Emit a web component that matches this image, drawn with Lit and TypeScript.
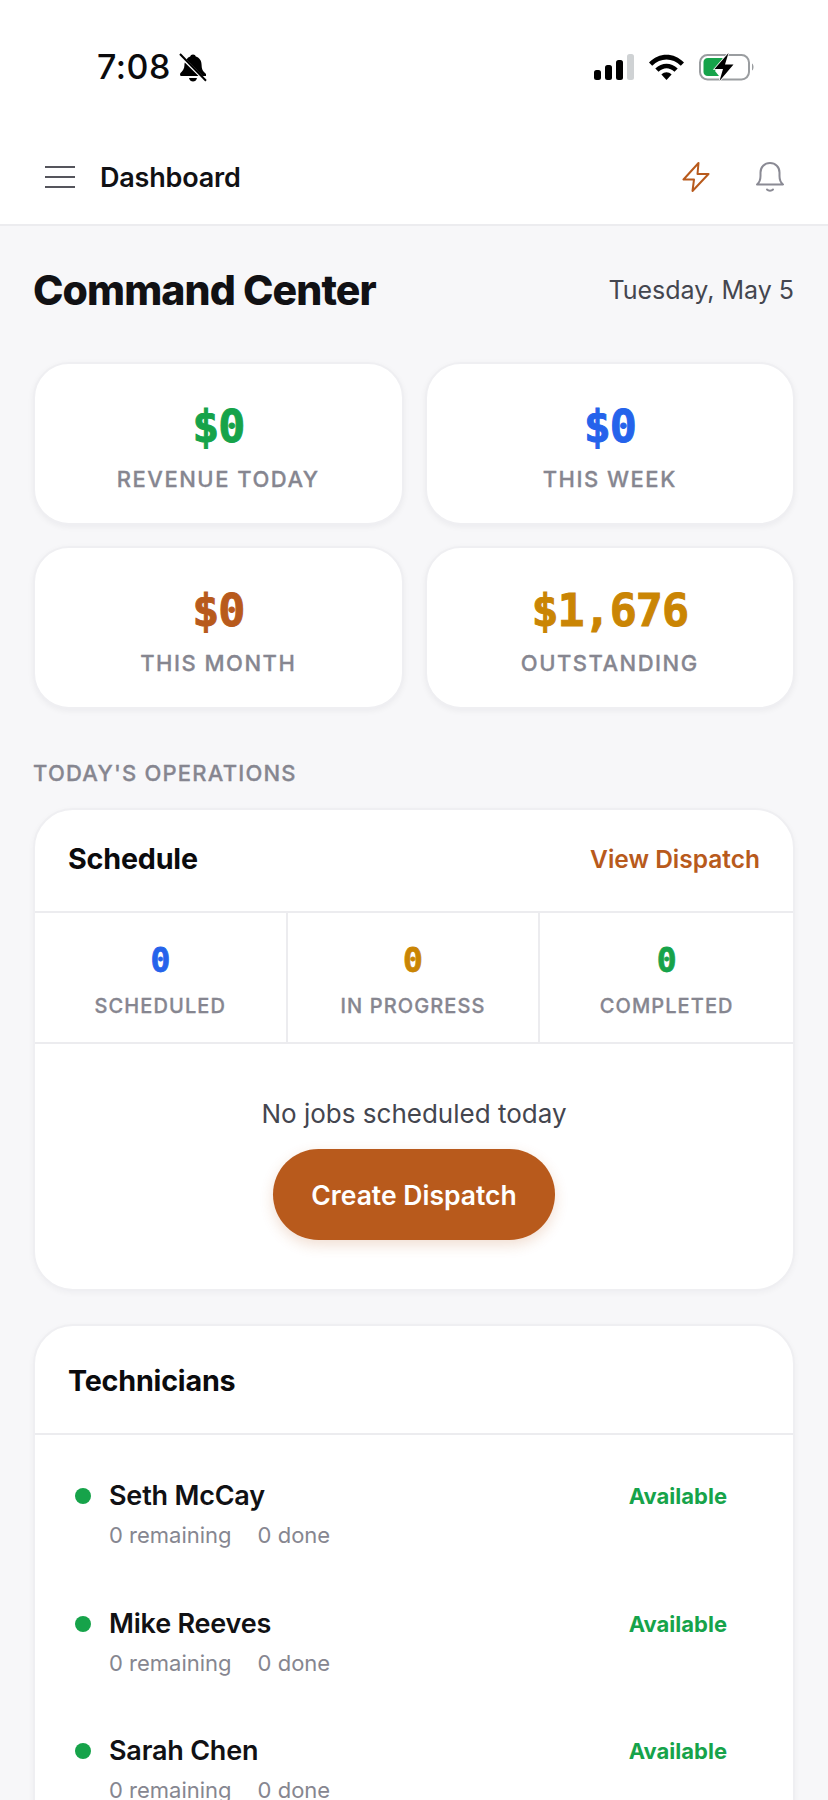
import { LitElement, html, css } from "lit";
import { customElement } from "lit/decorators.js";

const kpis = [
  { v: "$0", l: "REVENUE TODAY", c: "green" },
  { v: "$0", l: "THIS WEEK", c: "blue" },
  { v: "$0", l: "THIS MONTH", c: "orange" },
  { v: "$1,676", l: "OUTSTANDING", c: "gold" },
];
const ops = [
  { v: "0", l: "SCHEDULED", c: "blue" },
  { v: "0", l: "IN PROGRESS", c: "gold" },
  { v: "0", l: "COMPLETED", c: "green" },
];
const techs = ["Seth McCay", "Mike Reeves", "Sarah Chen"];

@customElement("app-root")
export class AppRoot extends LitElement {
  static styles = css`
    :host { display: block; width: 828px; height: 1800px; overflow: hidden; background: #f7f7f9; font-family: Inter, "Liberation Sans", sans-serif; color: #111114; }
    * { box-sizing: border-box; }
    svg { display: block; flex: none; }
    .status { height: 120px; background: #fff; display: flex; align-items: flex-start; justify-content: space-between; padding: 47px 73px 0 97px; }
    .status-left { display: flex; align-items: center; gap: 8px; }
    .time { font-size: 34px; line-height: 40px; font-weight: 500; color: #0b0b0d; letter-spacing: 0.5px; }
    .status-right { display: flex; align-items: center; gap: 15px; height: 40px; }
    .topbar { height: 106px; background: #fff; border-bottom: 2px solid #ececef; display: flex; align-items: center; padding: 10px 44px 0 45px; }
    .page-name { margin-left: 25px; font-size: 27px; font-weight: 600; letter-spacing: -0.2px; flex: 1; }
    .top-icons { display: flex; align-items: center; gap: 46px; }
    main { padding: 0 33px; }
    .title-row { display: flex; justify-content: space-between; align-items: center; height: 48px; margin-top: 40px; }
    h1 { margin: 0; font-size: 41px; font-weight: 800; letter-spacing: -0.9px; }
    .date { font-size: 25px; color: #44464f; margin-right: 1px; }
    .kpis { display: grid; grid-template-columns: 1fr 1fr; column-gap: 21px; row-gap: 21px; margin-top: 48px; }
    .kpi { height: 163px; background: #fff; border: 2px solid #efeff2; border-radius: 36px; box-shadow: 0 2px 6px rgba(20, 20, 40, 0.05); display: flex; flex-direction: column; align-items: center; padding-top: 35px; }
    .kpi .val { font: 700 45px/56px "DejaVu Sans Mono", monospace; letter-spacing: -1px; -webkit-text-stroke: 1px currentColor; }
    .lbl { font-size: 22px; font-weight: 500; letter-spacing: 1.5px; color: #868690; -webkit-text-stroke: 0.3px currentColor; }
    .kpi .lbl { margin-top: 9px; line-height: 30px; }
    .green { color: #16a34a; }
    .blue { color: #2563eb; }
    .orange { color: #b85a1c; }
    .gold { color: #ca8504; }
    .section { margin: 49px 0 0; font-size: 22px; line-height: 30px; font-weight: 500; letter-spacing: 1.2px; color: #868690; -webkit-text-stroke: 0.3px currentColor; }
    .card { background: #fff; border: 2px solid #efeff2; border-radius: 40px; box-shadow: 0 2px 6px rgba(20, 20, 40, 0.04); overflow: hidden; }
    .sched { margin-top: 20px; height: 483px; }
    .card-head { display: flex; justify-content: space-between; align-items: center; border-bottom: 2px solid #ececef; padding: 0 33px 0 33px; }
    .sched .card-head { height: 103px; padding-bottom: 4px; }
    h2 { margin: 0; font-size: 28.7px; font-weight: 700; letter-spacing: -0.2px; color: #0b0b0d; }
    .link { font-size: 24.5px; font-weight: 600; color: #b85a1c; }
    .ops { display: grid; grid-template-columns: repeat(3, 1fr); height: 131px; border-bottom: 2px solid #ececef; }
    .op { display: flex; flex-direction: column; align-items: center; padding-top: 28px; }
    .op:not(:last-child) { border-right: 2px solid #ececef; }
    .op .val { font: 700 33px/40px "DejaVu Sans Mono", monospace; -webkit-text-stroke: 0.8px currentColor; }
    .op .lbl { font-size: 20px; line-height: 28px; margin-top: 11px; letter-spacing: 1.1px; }
    .empty { display: flex; flex-direction: column; align-items: center; padding-top: 54px; }
    .empty p { margin: 0; font-size: 26px; line-height: 32px; color: #44464f; }
    .btn { margin-top: 19px; width: 282px; height: 91px; border-radius: 46px; background: #b85a1c; color: #fff; font-size: 26.5px; font-weight: 600; display: flex; align-items: center; justify-content: center; box-shadow: 0 5px 14px rgba(184, 90, 28, 0.2); }
    .techs { margin-top: 33px; }
    .techs .card-head { height: 109px; padding-top: 2px; }
    .tech-list { padding: 43px 66px 0 40px; }
    .tech { display: flex; justify-content: space-between; height: 127.7px; }
    .dot { width: 16px; height: 16px; border-radius: 50%; background: #16a34a; margin-top: 10px; flex: none; }
    .who { flex: 1; margin-left: 18px; }
    .name { font-size: 27px; line-height: 36px; font-weight: 600; letter-spacing: -0.2px; }
    .sub { display: flex; gap: 26px; margin-top: 7px; font-size: 22px; line-height: 28px; color: #868690; }
    .state { font-size: 22px; line-height: 36px; font-weight: 700; color: #16a34a; }
  `;

  private statusIcons() {
    return html`
      <svg width="40" height="26" viewBox="0 0 40 26">
        <rect x="0" y="16" width="7" height="10" rx="2.5" fill="#000"/>
        <rect x="11" y="11" width="7" height="15" rx="2.5" fill="#000"/>
        <rect x="22" y="6" width="7" height="20" rx="2.5" fill="#000"/>
        <rect x="33" y="0" width="7" height="26" rx="2.5" fill="#cfd2d4"/>
      </svg>
      <svg width="35" height="26" viewBox="0 0 35 26">
        <path d="M0 8.5 C10 -2 25 -2 35 8.5 L31.8 11.8 C23.5 3.5 11.5 3.5 3.2 11.8Z" fill="#000"/>
        <path d="M6.3 14.6 C12.8 8 22.2 8 28.7 14.6 L25.5 17.8 C20.5 13 14.5 13 9.5 17.8Z" fill="#000"/>
        <path d="M12.4 20.4 C15.5 17.6 19.5 17.6 22.6 20.4 L17.5 26Z" fill="#000"/>
      </svg>
      <svg width="56" height="28" viewBox="0 0 56 28">
        <rect x="1" y="2" width="49" height="24.5" rx="7.5" fill="none" stroke="#9a9da0" stroke-width="2"/>
        <path d="M53 10.5 C55 11.5 55 16.5 53 17.5Z" fill="#9a9da0"/>
        <path d="M9 5 H24 L16 18 L20 23 H9 C6 23 4.5 21 4.5 19 V9 C4.5 7 6 5 9 5Z" fill="#16a34a"/>
        <path d="M29.5 0 L15.5 16 H24 L20.5 28 L34.5 11.5 H26Z" fill="#000" stroke="#fff" stroke-width="1.5" paint-order="stroke"/>
      </svg>
    `;
  }

  render() {
    return html`
      <div class="status">
        <div class="status-left">
          <span class="time">7:08</span>
          <svg width="28" height="29" viewBox="0 0 28 29">
            <path d="M14 1.5 C15.5 1.5 16.5 2.4 16.8 3.6 C20.8 4.8 22.6 8 22.6 12 C22.6 15.5 23.5 17.5 25 19 L27 21 V23 H23.5 L7.5 6.5 C8.5 5 9.8 4.2 11.2 3.6 C11.5 2.4 12.5 1.5 14 1.5Z" fill="#000"/>
            <path d="M5.8 9.5 C5.5 10.5 5.4 11.5 5.4 12.5 C5.4 15.5 3.5 18 1.5 20 C.8 20.8 .8 23 2.2 23 H19.5 Z" fill="#000"/>
            <path d="M10 25 H18 C17.5 27.5 15.8 28.5 14 28.5 C12.2 28.5 10.5 27.5 10 25Z" fill="#000"/>
            <path d="M1 1 L27 27.8" stroke="#000" stroke-width="2"/>
          </svg>
        </div>
        <div class="status-right">${this.statusIcons()}</div>
      </div>
      <div class="topbar">
        <svg width="30" height="22" viewBox="0 0 30 22">
          <path d="M0 1H30M0 11H30M0 21H30" stroke="#55555c" stroke-width="2"/>
        </svg>
        <span class="page-name">Dashboard</span>
        <div class="top-icons">
          <svg width="28" height="30" viewBox="0 0 28 30" fill="none">
            <path d="M16.5 1 L1.5 17.5 H12 L10.5 29 L26.5 12 H15.5Z" stroke="#b85a1c" stroke-width="2" stroke-linejoin="round"/>
          </svg>
          <svg width="28" height="30" viewBox="0 0 28 30" fill="none" stroke="#8a8a94" stroke-width="2" stroke-linecap="round" stroke-linejoin="round">
            <path d="M1 22.5 C3.5 20.5 4.5 18 4.5 14 V10.5 C4.5 5 8.5 1 14 1 C19.5 1 23.5 5 23.5 10.5 V14 C23.5 18 24.5 20.5 27 22.5Z"/>
            <path d="M11 27.5 C12.5 29 15.5 29 17 27.5"/>
          </svg>
        </div>
      </div>
      <main>
        <div class="title-row">
          <h1>Command Center</h1>
          <span class="date">Tuesday, May 5</span>
        </div>
        <div class="kpis">
          ${kpis.map((k) => html`<div class="kpi"><div class="val ${k.c}">${k.v}</div><div class="lbl">${k.l}</div></div>`)}
        </div>
        <div class="section">TODAY'S OPERATIONS</div>
        <div class="card sched">
          <div class="card-head"><h2>Schedule</h2><span class="link">View Dispatch</span></div>
          <div class="ops">
            ${ops.map((o) => html`<div class="op"><div class="val ${o.c}">${o.v}</div><div class="lbl">${o.l}</div></div>`)}
          </div>
          <div class="empty">
            <p>No jobs scheduled today</p>
            <div class="btn">Create Dispatch</div>
          </div>
        </div>
        <div class="card techs">
          <div class="card-head"><h2>Technicians</h2></div>
          <div class="tech-list">
            ${techs.map((t) => html`
              <div class="tech">
                <span class="dot"></span>
                <div class="who">
                  <div class="name">${t}</div>
                  <div class="sub"><span>0 remaining</span><span>0 done</span></div>
                </div>
                <span class="state">Available</span>
              </div>`)}
          </div>
        </div>
      </main>
    `;
  }
}
